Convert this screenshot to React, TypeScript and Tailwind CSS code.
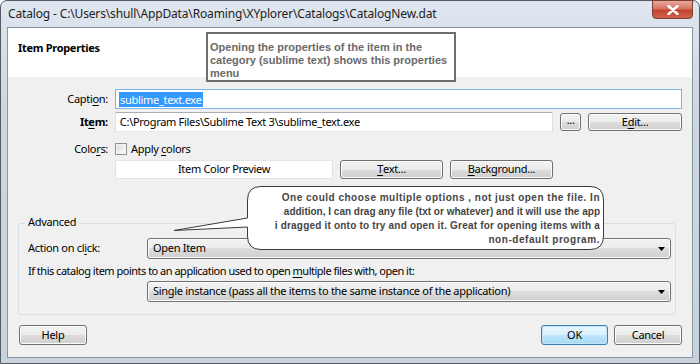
import React from "react";

const ui = { fontFamily: '"Noto Sans", "Liberation Sans", sans-serif', letterSpacing: "-0.3px" };

function Btn({ children, className = "", primary = false }: { children: React.ReactNode; className?: string; primary?: boolean }) {
  return (
    <div
      className={
        "flex items-center justify-center rounded-[3px] border text-[11px] text-black " +
        (primary
          ? "border-[#3c7fb1] bg-[linear-gradient(#eaf6fd_0%,#d9f0fc_50%,#bee6fd_50%,#a7d9f5_100%)] shadow-[inset_0_0_0_1px_#c4e5f6]"
          : "border-[#707070] bg-[linear-gradient(#f2f2f2_0%,#ebebeb_50%,#dddddd_50%,#cfcfcf_100%)] shadow-[inset_0_0_0_1px_#fcfcfc]") +
        " " +
        className
      }
    >
      {children}
    </div>
  );
}

function Combo({ text, className = "" }: { text: string; className?: string }) {
  return (
    <div
      className={
        "flex items-center justify-between rounded-[3px] border border-[#707070] bg-[linear-gradient(#f2f2f2_0%,#ebebeb_50%,#dddddd_50%,#cfcfcf_100%)] shadow-[inset_0_0_0_1px_#fcfcfc] pl-[5px] pr-[5px] text-[11px] text-black " +
        className
      }
    >
      <span>{text}</span>
      <svg width="7" height="4" viewBox="0 0 7 4">
        <path d="M0 0 H7 L3.5 4 Z" fill="#000" />
      </svg>
    </div>
  );
}

const U = ({ c }: { c: string }) => <span className="underline underline-offset-2">{c}</span>;

export default function App() {
  return (
    <div className="relative h-[364px] w-[700px] overflow-hidden bg-white" style={ui}>
      <div className="flex h-[364px] w-[700px] flex-col rounded-t-[7px] border border-[#555b63] bg-[linear-gradient(#dfe6ef,#cdd6e1_30%,#c9d3de)]">
        {/* title bar */}
        <div className="relative flex h-[26px] items-center pl-[7px] text-[12px] tracking-[-0.15px] text-[#1e1e1e]">
          <span className="-mt-[1px]">Catalog - C:\Users\shull\AppData\Roaming\XYplorer\Catalogs\CatalogNew.dat</span>
          <div className="absolute right-[6px] top-[-1px] flex h-[19px] w-[41px] items-center justify-center rounded-b-[4px] border border-[#7a3e35] bg-[linear-gradient(#e9a89b,#d67462_45%,#c4432f_55%,#d0644f)]">
            <svg width="12" height="10" viewBox="0 0 12 10">
              <path d="M1.5 1 L10.5 9 M10.5 1 L1.5 9" stroke="#ffffff" strokeWidth="2.4" strokeLinecap="round" />
            </svg>
          </div>
        </div>
        {/* client */}
        <div className="mx-[6px] flex h-[331px] flex-col border border-[#8a96a6] bg-[#f0f0f0]">
          <div className="flex h-[49px] items-start bg-white pl-[10px] pt-[12px] text-[11px] font-bold text-black">
            Item Properties
          </div>
          <div className="flex flex-col pl-[8px] pr-[10px]">
            {/* caption */}
            <div className="mt-[12px] flex items-center">
              <div className="w-[99px] pr-[7px] text-right text-[11px]">
                Capti<U c="o" />n:
              </div>
              <div className="flex h-[20px] flex-1 items-center border border-[#7eb4ea] bg-white pl-[3px] text-[11px]">
                <span className="bg-[#3399ff] px-[1px] leading-[15px] text-white">sublime_text.exe</span>
              </div>
            </div>
            {/* item */}
            <div className="mt-[3px] flex items-center">
              <div className="w-[99px] pr-[7px] text-right text-[11px] font-bold">
                It<U c="e" />m:
              </div>
              <div className="flex h-[20px] w-[439px] items-center border border-[#abadb3] border-b-[#e3e9ef] border-l-[#e2e3ea] border-r-[#dbdfe6] bg-white pl-[4px] text-[11px]">
                C:\Program Files\Sublime Text 3\sublime_text.exe
              </div>
              <Btn className="ml-[7px] h-[18px] w-[21px] pb-[3px]">...</Btn>
              <Btn className="ml-[7px] h-[18px] w-[94px]">
                E<U c="d" />it...
              </Btn>
            </div>
            {/* colors */}
            <div className="mt-[9px] flex h-[16px] items-center">
              <div className="w-[99px] pr-[7px] text-right text-[11px]">
                Colo<U c="r" />s:
              </div>
              <div className="h-[12px] w-[12px] border border-[#8e8f8f] bg-[linear-gradient(135deg,#dcdcdc,#fdfdfd)] shadow-[inset_0_0_0_1px_#f4f4f4]" />
              <span className="ml-[4px] text-[11px]">
                Apply <U c="c" />olors
              </span>
            </div>
            <div className="mt-[3px] flex items-center">
              <div className="w-[99px]" />
              <div className="flex h-[19px] w-[218px] items-center justify-center border border-[#e3e3e3] bg-white text-[11px]">
                Item Color Preview
              </div>
              <Btn className="ml-[7px] h-[19px] w-[103px]">
                <U c="T" />ext...
              </Btn>
              <Btn className="ml-[7px] h-[19px] w-[103px]">
                <U c="B" />ackground...
              </Btn>
            </div>
            {/* advanced group */}
            <div className="relative mt-[44px] ml-[2px] mr-[6px] flex h-[92px] flex-col rounded-[3px] border border-[#d5dfe5] pl-[9px] pr-[4px]">
              <div className="absolute left-[6px] top-[-10px] bg-[#f0f0f0] px-[3px] text-[11px]">Advanced</div>
              <div className="mt-[14px] flex items-center">
                <div className="w-[119px] text-[11px]">
                  Action on cl<U c="i" />ck:
                </div>
                <Combo text="Open Item" className="h-[21px] flex-1" />
              </div>
              <div className="mt-[1px] h-[21px] text-[11px] leading-[21px] tracking-[-0.5px]">
                If this catalog item points to an application used to open <U c="m" />ultiple files with, open it:
              </div>
              <div className="flex">
                <div className="w-[119px]" />
                <Combo text="Single instance (pass all the items to the same instance of the application)" className="h-[21px] flex-1" />
              </div>
            </div>
            {/* buttons */}
            <div className="mt-[10px] ml-[3px] flex items-center">
              <Btn className="h-[20px] w-[68px]">Help</Btn>
              <div className="flex-1" />
              <Btn primary className="h-[20px] w-[67px]">OK</Btn>
              <Btn className="ml-[6px] h-[20px] w-[68px]">Cancel</Btn>
            </div>
          </div>
        </div>
      </div>

      {/* annotation box */}
      <div
        className="absolute left-[206px] top-[32px] h-[50px] w-[250px] border-2 border-[#6e6e6e] bg-white pl-[2px] pt-[7px] text-[11px] font-bold leading-[13px] tracking-normal text-[#6a6a6a]"
        style={{ fontFamily: '"Liberation Sans", Arial, sans-serif' }}
      >
        Opening the properties of the item in the
        <br />
        category (sublime text) shows this properties
        <br />
        menu
      </div>

      {/* speech bubble */}
      <svg className="absolute left-0 top-0" width="700" height="364" viewBox="0 0 700 364">
        <path
          d="M261 186.5 H590 Q603.5 186.5 603.5 200 V236 Q603.5 249.5 590 249.5 H261 Q247.5 249.5 247.5 236 V227 L174 230.5 L247.5 218 V200 Q247.5 186.5 261 186.5 Z"
          fill="#ffffff"
          stroke="#3a3a3a"
          strokeWidth="1"
        />
      </svg>
      <div
        className="absolute left-[248px] top-[191px] w-[352px] text-right text-[10px] font-bold leading-[14px] tracking-normal text-[#454545]"
        style={{ fontFamily: '"Liberation Sans", Arial, sans-serif' }}
      >
        <span className="tracking-[0.5px]">One could choose multiple options , not just open the file. In</span>
        <br />
        addition, I can drag any file (txt or whatever) and it will use the app
        <br />
        <span className="tracking-[0.2px]">i dragged it onto to try and open it. Great for opening items with a</span>
        <br />
        <span className="tracking-[0.55px]">non-default program.</span>
      </div>
    </div>
  );
}
